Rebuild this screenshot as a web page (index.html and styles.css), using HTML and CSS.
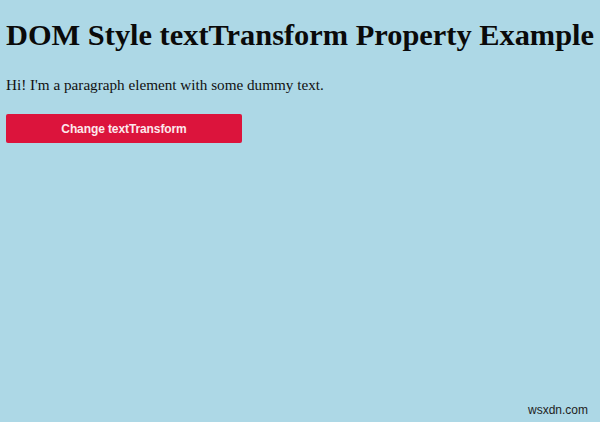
FILE: index.html
```html
<!DOCTYPE html>
<html>
<head>
<meta charset="utf-8">
<link rel="stylesheet" href="styles.css">
</head>
<body class="page">
<h1 class="title">DOM Style textTransform Property Example</h1>
<p class="para">Hi! I'm a paragraph element with some dummy text.</p>
<button class="btn">Change textTransform</button>
<div class="watermark">wsxdn.com</div>
</body>
</html>
```
FILE: styles.css
```css
html, body { height: 100%; }
.page {
  margin: 0;
  padding: 0 6px;
  background: #add8e6;
  font-family: "Liberation Serif", "Times New Roman", serif;
  color: #000;
  position: relative;
  box-sizing: border-box;
  overflow: hidden;
}
.title {
  font-size: 30.4px;
  font-weight: bold;
  margin: 18px 0 0;
  line-height: 34px;
  white-space: nowrap;
  color: #0a0a0a;
}
.para {
  font-size: 15.2px;
  margin: 24px 0 0;
  line-height: 18px;
  color: #111;
}
.btn {
  display: block;
  margin-top: 20px;
  width: 236px;
  height: 29px;
  background: #dc143c;
  color: #fde8ec;
  border: none;
  border-radius: 2px;
  font-family: "Liberation Sans", Arial, sans-serif;
  font-size: 12px;
  font-weight: bold;
  letter-spacing: -0.1px;
  padding: 0;
}
.watermark {
  position: absolute;
  right: 12px;
  bottom: 5px;
  font-family: "Liberation Sans", Arial, sans-serif;
  font-size: 12px;
  color: #222;
}
```
